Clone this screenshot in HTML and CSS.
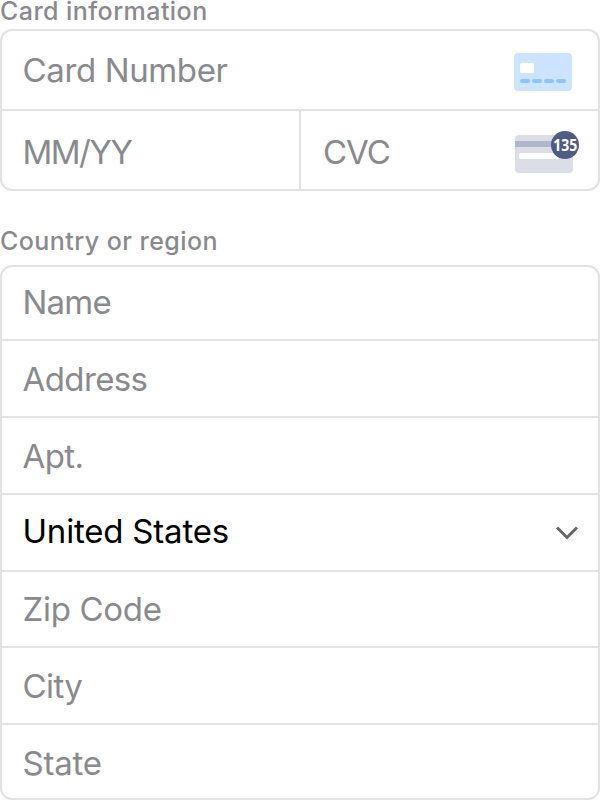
FILE: index.html
```html
<!DOCTYPE html>
<html lang="en">
<head>
<meta charset="utf-8">
<title>Card information</title>
<link rel="stylesheet" href="styles.css">
</head>
<body>
<main class="form">
  <h2 class="label card-label"><span>Card information</span></h2>
  <section class="group card">
    <div class="field number"><span class="t-number">Card Number</span>
      <svg class="brand" width="58" height="38" viewBox="0 0 58 38"><rect width="58" height="38" rx="4" fill="#cce4ff"/><rect x="6" y="10" width="14" height="10" rx="1.500" fill="#fff"/><path d="M8 28H14M20 28H26M32 28H38M44 28H50" stroke="#8fc3ff" stroke-width="4" stroke-linecap="round"/></svg>
    </div>
    <div class="split">
      <div class="field expiry"><span class="t-expiry">MM/YY</span></div>
      <div class="field cvc"><span class="t-cvc">CVC</span>
        <svg class="code" width="64" height="42" viewBox="0 0 64 42"><rect x="0" y="4" width="58" height="38" rx="4" fill="#dbdee6"/><path d="M0 10H58V16H0Z" fill="#b1b7ca"/><rect x="4" y="22" width="40" height="6" rx="1.500" fill="#fff"/><circle cx="50" cy="14" r="14" fill="#505d82"/><text x="50.300" y="19.700" text-anchor="middle" textLength="24" lengthAdjust="spacingAndGlyphs" class="digits">135</text></svg>
      </div>
    </div>
  </section>
  <h2 class="label country-label"><span>Country or region</span></h2>
  <section class="group address">
    <div class="field"><span class="t-name">Name</span></div>
    <div class="field"><span class="t-address">Address</span></div>
    <div class="field"><span class="t-apt">Apt.</span></div>
    <div class="field selected"><span class="t-country">United States</span>
      <svg class="chevron" width="24" height="16" viewBox="0 0 24 16"><path d="M2 2.500L12 12.500L22 2.500" fill="none" stroke="#666668" stroke-width="3"/></svg>
    </div>
    <div class="field"><span class="t-zip">Zip Code</span></div>
    <div class="field"><span class="t-city">City</span></div>
    <div class="field"><span class="t-state">State</span></div>
  </section>
</main>
</body>
</html>
```

FILE: styles.css
```css
* { box-sizing: border-box; }
body { margin: 0; background: #fff; font-family: Inter, "Liberation Sans", sans-serif; color: #8a8a8e; }
.form { width: 600px; height: 800px; overflow: hidden; }
.label { margin: 0; font-size: 25px; line-height: 30px; font-weight: 500; letter-spacing: 0.45px; white-space: nowrap; }
.card-label { height: 29px; line-height: 23px; }
.country-label { height: 39px; margin-top: 35px; }
.group { border: 2px solid #e2e2e3; border-radius: 12px; }
.field { display: flex; align-items: center; justify-content: space-between; padding-left: 20.5px; font-size: 33px; line-height: 40px; white-space: nowrap; }
.card { height: 162px; }
.number { height: 80px; border-bottom: 2px solid #e2e2e3; padding-top: 4px; padding-right: 26px; }
.split { display: grid; grid-template-columns: 299px 1fr; height: 78px; }
.expiry { border-right: 2px solid #e2e2e3; padding-top: 3px; }
.cvc { padding-left: 22px; padding-right: 19px; padding-top: 4px; }
.digits { font: 700 16px "Noto Sans", sans-serif; fill: #fff; }
.code, .brand, .chevron { display: block; flex: none; overflow: visible; }
.address { height: 535px; display: grid; grid-template-rows: 74px 77px 77px 77px 76px 77px 73px; }
.address .field { border-bottom: 2px solid #e2e2e3; padding-right: 19px; }
.address .field:last-child { border-bottom: 0; }
.selected { color: #000; }
.t-number { letter-spacing: -0.37px; padding-bottom: 4px; }
.t-expiry { letter-spacing: -1.5px; }
.t-cvc { letter-spacing: -1px; }
.t-name { letter-spacing: -0.8px; padding-bottom: 2px; }
.t-address, .t-apt, .t-city { letter-spacing: -0.6px; }
.t-country, .t-state { letter-spacing: -0.2px; }
.t-zip { letter-spacing: -0.3px; }
.t-country { padding-bottom: 3px; }
.t-state { padding-top: 2px; }
```
